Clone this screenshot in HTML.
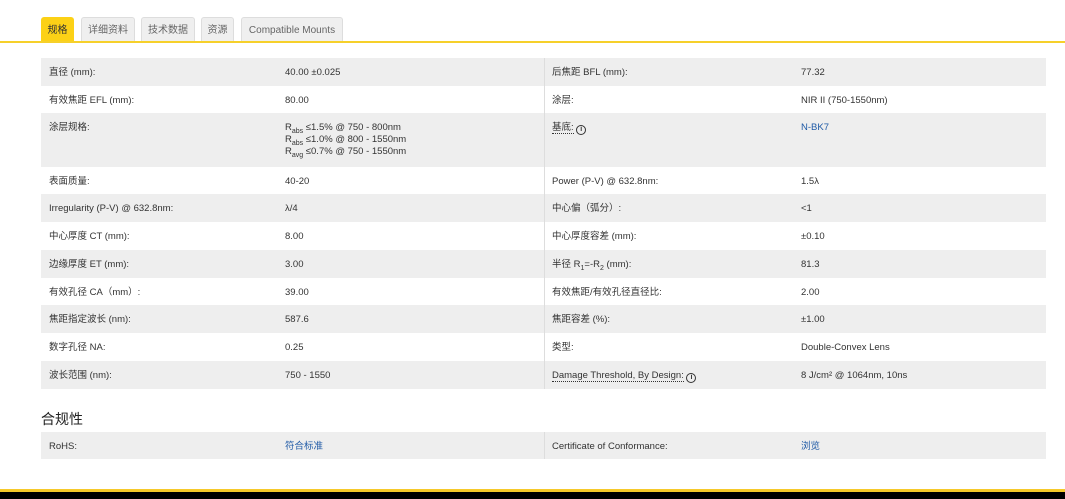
<!DOCTYPE html>
<html><head><meta charset="utf-8"><style>
*{margin:0;padding:0;box-sizing:border-box}
body{width:1065px;height:499px;overflow:hidden;background:#fff;font-family:"Liberation Sans","Noto Sans CJK SC",sans-serif;font-size:9.5px;color:#333;position:relative}
.tab{position:absolute;top:17px;height:24px;line-height:25px;background:#efefef;border:1px solid #ddd;border-bottom:none;border-radius:3px 3px 0 0;color:#666;font-size:10px;text-align:center}
.tab.a{background:#fcd116;border-color:#fcd116;color:#333}
.line{position:absolute;left:0;top:41px;width:1065px;height:2px;background:#f6d02a}
.row{position:absolute;left:41px;width:1005px}
.row.s{background:#eeeeee}
.row span{position:absolute;top:1px;white-space:nowrap}
.row .c1{left:8px}.row .c2{left:244px}.row .c3{left:511px}.row .c4{left:760px}
.row .dv{position:absolute;left:503px;top:0;bottom:0;width:1px;background:#ddd}
a{color:#1f5aa6;text-decoration:none}
.u{border-bottom:1px dotted #333}
.i{display:inline-block;width:10px;height:10px;border:1.5px solid #333;border-radius:50%;font-size:7px;line-height:7px;text-align:center;font-weight:bold;vertical-align:-1px}
sub{font-size:7px;line-height:0}
h3{position:absolute;left:41px;top:409px;font-size:14px;font-weight:normal;color:#222}
.by{position:absolute;left:0;top:489px;width:1065px;height:3px;background:#f6c92a}
.bk{position:absolute;left:0;top:492px;width:1065px;height:7px;background:#000}
</style></head><body>
<div class="tab a" style="left:41px;width:33px">规格</div>
<div class="tab" style="left:81px;width:54px">详细资料</div>
<div class="tab" style="left:141px;width:54px">技术数据</div>
<div class="tab" style="left:201px;width:33px">资源</div>
<div class="tab" style="left:241px;width:102px">Compatible Mounts</div>
<div class="line"></div>

<div class="row s" style="top:58px;height:28px;line-height:28px"><i class="dv"></i><span class="c1">直径 (mm):</span><span class="c2">40.00 ±0.025</span><span class="c3">后焦距 BFL (mm):</span><span class="c4">77.32</span></div>
<div class="row" style="top:86px;height:27px;line-height:27px"><i class="dv"></i><span class="c1">有效焦距 EFL (mm):</span><span class="c2">80.00</span><span class="c3">涂层:</span><span class="c4">NIR II (750-1550nm)</span></div>
<div class="row s" style="top:113px;height:54px;line-height:12px"><i class="dv"></i><span class="c1" style="top:9px">涂层规格:</span><span class="c2" style="top:9px">R<sub>abs</sub> ≤1.5% @ 750 - 800nm<br>R<sub>abs</sub> ≤1.0% @ 800 - 1550nm<br>R<sub>avg</sub> ≤0.7% @ 750 - 1550nm</span><span class="c3" style="top:9px"><span class="u" style="position:static">基底:</span> <span class="i" style="position:static">i</span></span><span class="c4" style="top:9px"><a>N-BK7</a></span></div>
<div class="row" style="top:167px;height:27px;line-height:27px"><i class="dv"></i><span class="c1">表面质量:</span><span class="c2">40-20</span><span class="c3">Power (P-V) @ 632.8nm:</span><span class="c4">1.5λ</span></div>
<div class="row s" style="top:194px;height:28px;line-height:28px"><i class="dv"></i><span class="c1">Irregularity (P-V) @ 632.8nm:</span><span class="c2">λ/4</span><span class="c3">中心偏（弧分）:</span><span class="c4">&lt;1</span></div>
<div class="row" style="top:222px;height:28px;line-height:28px"><i class="dv"></i><span class="c1">中心厚度 CT (mm):</span><span class="c2">8.00</span><span class="c3">中心厚度容差 (mm):</span><span class="c4">±0.10</span></div>
<div class="row s" style="top:250px;height:28px;line-height:28px"><i class="dv"></i><span class="c1">边缘厚度 ET (mm):</span><span class="c2">3.00</span><span class="c3">半径 R<sub>1</sub>=-R<sub>2</sub> (mm):</span><span class="c4">81.3</span></div>
<div class="row" style="top:278px;height:27px;line-height:27px"><i class="dv"></i><span class="c1">有效孔径 CA（mm）:</span><span class="c2">39.00</span><span class="c3">有效焦距/有效孔径直径比:</span><span class="c4">2.00</span></div>
<div class="row s" style="top:305px;height:28px;line-height:28px"><i class="dv"></i><span class="c1">焦距指定波长 (nm):</span><span class="c2">587.6</span><span class="c3">焦距容差 (%):</span><span class="c4">±1.00</span></div>
<div class="row" style="top:333px;height:28px;line-height:28px"><i class="dv"></i><span class="c1">数字孔径 NA:</span><span class="c2">0.25</span><span class="c3">类型:</span><span class="c4">Double-Convex Lens</span></div>
<div class="row s" style="top:361px;height:28px;line-height:28px"><i class="dv"></i><span class="c1">波长范围 (nm):</span><span class="c2">750 - 1550</span><span class="c3"><span class="u" style="position:static">Damage Threshold, By Design:</span> <span class="i" style="position:static">i</span></span><span class="c4">8 J/cm² @ 1064nm, 10ns</span></div>

<h3>合规性</h3>
<div class="row s" style="top:432px;height:27px;line-height:27px"><i class="dv"></i><span class="c1">RoHS:</span><span class="c2"><a>符合标准</a></span><span class="c3">Certificate of Conformance:</span><span class="c4"><a>浏览</a></span></div>

<div class="by"></div><div class="bk"></div>
</body></html>
